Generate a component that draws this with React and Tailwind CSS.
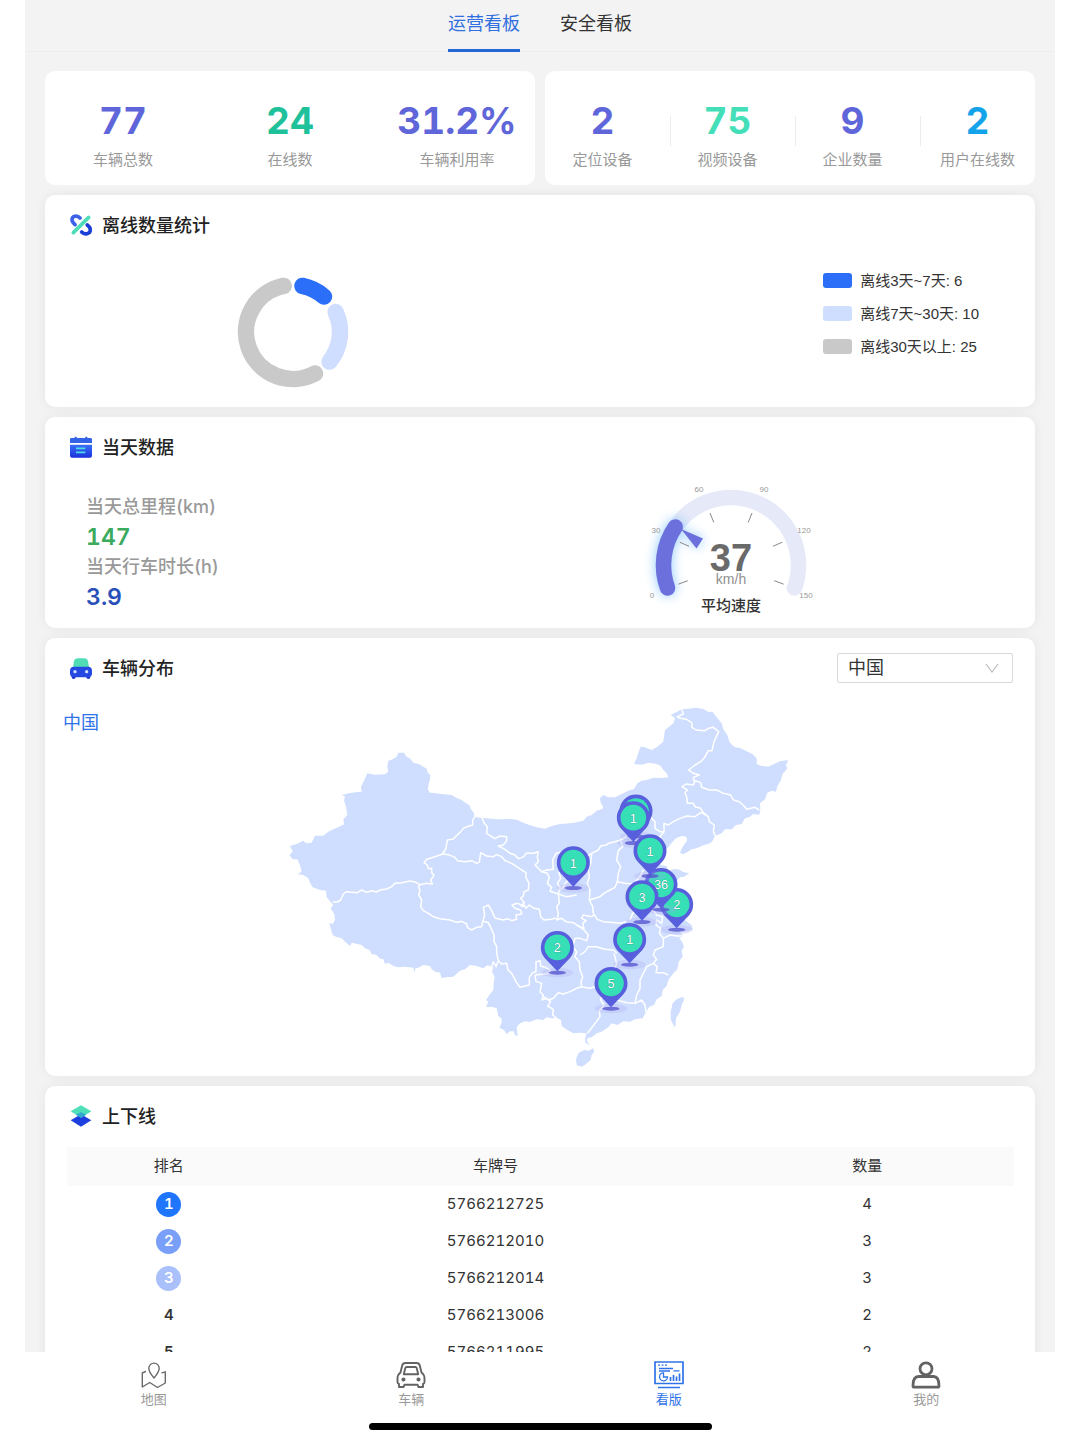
import React, { useState } from "react";
import clsx from "clsx";

const fleetStats = [
  { label: "车辆总数", value: "77", color: "text-[#5f66d9]" },
  { label: "在线数", value: "24", color: "text-[#1fc19b]" },
  { label: "车辆利用率", value: "31.2%", color: "text-[#5f66d9]" },
];

const deviceStats = [
  { label: "定位设备", value: "2", color: "text-[#5f66d9]" },
  { label: "视频设备", value: "75", color: "text-[#44dfb9]" },
  { label: "企业数量", value: "9", color: "text-[#5f66d9]" },
  { label: "用户在线数", value: "2", color: "text-[#12a3ea]" },
];

const offlineLegend = [
  { label: "离线3天~7天: 6", color: "bg-[#2b6ff8]" },
  { label: "离线7天~30天: 10", color: "bg-[#cfdefe]" },
  { label: "离线30天以上: 25", color: "bg-[#c9c9c9]" },
];

const rankRows = [
  { rank: 1, plate: "5766212725", count: 4, badge: "bg-[#1f75fb]" },
  { rank: 2, plate: "5766212010", count: 3, badge: "bg-[#7a9ff8]" },
  { rank: 3, plate: "5766212014", count: 3, badge: "bg-[#a9c0fa]" },
  { rank: 4, plate: "5766213006", count: 2 },
  { rank: 5, plate: "5766211995", count: 2 },
];

// pins are listed back to front
const pins = [
  { x: 880, y: 518, count: "1" },
  { x: 1068, y: 363, count: "" },
  { x: 1060, y: 383, count: "1" },
  { x: 1190, y: 643, count: "2" },
  { x: 1143, y: 583, count: "36" },
  { x: 1110, y: 482, count: "1" },
  { x: 1086, y: 620, count: "3" },
  { x: 1049, y: 748, count: "1" },
  { x: 832, y: 772, count: "2" },
  { x: 993, y: 880, count: "5" },
];

const mainland =
  "355,188 372,188 380,200 391,206 400,218 417,222 430,230 440,236 442,246 451,256 450,268 446,282 443,298 450,308 462,309 490,313 515,315 530,324 545,330 558,340 568,345 572,356 582,370 583,381 610,384 650,388 695,387 712,390 730,398 748,405 770,412 795,416 815,408 840,402 880,399 910,392 920,380 935,375 950,362 967,357 970,350 962,338 960,325 970,315 985,322 1005,322 1030,310 1050,300 1062,298 1072,280 1085,272 1100,270 1120,263 1140,264 1165,262 1160,250 1150,240 1142,228 1130,222 1105,218 1085,224 1062,222 1070,205 1075,188 1082,170 1095,172 1115,180 1130,172 1150,155 1152,140 1155,120 1170,108 1180,100 1185,85 1172,75 1190,66 1205,58 1225,56 1250,53 1270,57 1285,66 1297,65 1312,84 1325,100 1330,118 1342,135 1348,155 1357,166 1365,172 1380,174 1400,184 1418,193 1430,205 1430,222 1442,227 1465,230 1482,222 1500,214 1525,210 1518,225 1522,235 1508,252 1502,272 1492,288 1488,305 1475,302 1462,308 1455,328 1440,340 1441,358 1438,374 1420,372 1410,380 1395,385 1385,402 1368,405 1355,418 1335,418 1325,430 1305,438 1298,452 1290,460 1270,466 1250,475 1235,478 1222,486 1210,493 1200,488 1208,470 1222,450 1218,440 1205,438 1188,445 1175,458 1165,472 1150,482 1140,495 1136,510 1142,525 1160,528 1165,545 1178,538 1195,538 1210,546 1228,550 1212,560 1200,562 1190,572 1178,580 1172,600 1185,615 1195,640 1208,660 1215,690 1235,706 1238,718 1225,724 1200,728 1212,738 1198,745 1206,755 1212,770 1205,782 1208,800 1196,815 1192,838 1180,850 1165,870 1160,888 1148,900 1145,918 1130,928 1122,945 1108,950 1098,966 1088,985 1065,988 1050,995 1030,994 1012,1005 995,1000 985,1012 965,1025 950,1030 935,1042 922,1045 921,1054 930,1066 916,1058 915,1045 920,1030 900,1028 880,1030 862,1020 845,1008 843,990 830,984 815,985 800,982 790,990 770,988 750,996 735,994 720,1000 710,1012 713,1038 704,1035 702,1024 690,1024 680,1032 672,1020 658,1013 665,998 664,985 655,978 650,955 635,950 618,951 625,935 618,930 632,910 640,900 641,880 644,860 636,845 640,830 622,826 610,835 590,828 570,825 555,838 540,842 520,860 500,862 485,864 480,848 466,845 455,838 450,828 430,825 415,833 405,836 404,850 400,833 375,830 355,832 340,828 325,818 315,822 310,808 298,805 290,795 275,792 268,780 255,775 245,765 232,762 215,758 210,768 195,755 185,745 168,740 158,735 152,715 148,698 158,702 165,690 163,672 152,655 160,645 152,636 140,622 138,602 120,600 98,592 90,578 85,565 70,555 53,552 65,545 60,525 52,508 38,508 28,495 38,485 30,468 50,462 70,452 78,460 95,458 105,437 130,437 145,425 160,418 178,410 192,403 190,388 202,375 198,350 192,330 195,320 186,315 205,310 232,306 245,305 243,292 252,272 262,250 285,254 315,253 325,245 322,230 325,212 338,208 350,200";

const provinceBorders = [
  "583,381 578,392 578,405 560,410 550,415 540,428 528,438 520,447 502,450 498,475 488,492 465,500 440,508 432,518 442,525 445,536 455,535 455,548 462,556 452,570 457,582 440,580 420,584 405,576 390,573 365,578 345,580 335,590 320,597 300,600 290,606 275,602 260,607 245,600 232,608 200,605 190,612 182,630 172,636 158,636",
  "488,492 505,494 525,502 532,512 555,515 575,512 590,520 598,516 602,488 620,498 640,500 650,494 665,500 675,512 695,520 710,530 725,540 738,548 738,562 747,580 745,600 732,605 730,618 722,625 733,638 726,645 712,640 696,645 705,655 722,660 725,672 708,675 710,688 695,692 682,686 670,690 645,684 635,662 625,645 610,652 614,675 608,695 605,710 590,712 575,720 562,712 560,702 545,694 530,697 510,690 480,686 460,680 445,670 430,662 422,650 425,630 416,615 420,600 415,590 420,584",
  "608,693 625,698 632,712 642,735 642,755 650,770 650,790 655,812 648,830 640,815 636,828",
  "655,812 665,822 680,820 684,840 695,850 708,875 720,892 735,888 748,885 748,862 758,848 768,845 768,815 780,812 782,828 795,832 808,838 812,850 765,855 768,874 785,880 780,905 790,915 786,930 800,925 812,935 803,948 820,958 818,975 830,985",
  "605,380 612,398 622,410 620,430 632,438 645,446 660,438 680,440 680,452 670,465 655,468 675,478 690,490 705,495 715,506 732,500 738,490 760,490 775,485 772,500 775,515 765,525 775,535 785,545 800,540 820,538 818,510 828,490 845,486 860,490",
  "785,545 802,550 808,562 802,580 815,592 810,604 835,612 840,592 832,580 842,565 836,545",
  "722,650 732,645 738,655 748,645 762,655 778,658 782,680 792,690 815,688 825,684 832,690 835,670 830,650 838,640 835,612",
  "1040,440 1022,450 1005,455 990,458 978,465 962,468 955,480 935,490 932,520 925,540 928,560 922,580 930,600 928,630 938,650 940,670 952,688 970,695 990,697 1020,700 1040,695",
  "935,490 912,505 900,530 880,560 862,572 850,590 842,600",
  "1022,450 1028,470 1015,482 1010,510 1022,530 1015,550 1012,575 1035,580 1060,582 1080,560 1090,540",
  "1012,575 1005,592 990,600 975,608 960,620 928,630",
  "835,612 860,620 890,615",
  "830,690 845,685 858,695 880,698 890,705 912,715 908,700 918,692 905,685 910,675 935,680 942,675",
  "890,705 912,720 925,735 920,752 900,745 885,745 878,770 890,785 885,800 898,815 900,840 908,860 903,875 905,890 890,895 870,905 850,912 835,908 820,925 805,930 790,920",
  "900,795 915,785 925,770 948,770 975,778 1000,780 1010,790",
  "905,890 930,895 945,890 955,905 968,912 962,930 972,945 958,962 960,980 945,1000 930,1020 922,1030",
  "1002,790 1010,820 1000,850 1005,880",
  "1010,930 1040,938 1065,940 1085,930 1095,945 1098,966",
  "1065,940 1070,915 1080,895 1080,870 1090,850 1100,830 1120,820 1132,830 1128,848 1150,848 1165,855",
  "1120,820 1130,808 1120,795 1125,780 1150,770 1150,745 1138,730 1142,715 1128,705 1130,690 1145,700 1148,680 1130,675 1120,660 1095,665",
  "1150,745 1170,735 1190,738 1212,738",
  "1050,690 1058,670 1070,660",
  "1110,380 1125,395 1125,415 1140,425 1152,425 1152,400 1165,405 1180,395 1200,385 1220,378 1245,380 1262,368 1278,372",
  "1152,425 1140,440 1142,455 1128,470",
  "1306,438 1300,425 1303,405 1288,395 1285,380 1272,372 1262,355 1245,350 1240,340 1222,340 1220,320 1215,308 1222,300 1206,290 1218,282 1240,285 1245,272 1262,278 1265,292 1288,300 1310,300 1330,310 1352,315 1360,330 1378,335 1392,348 1400,358 1425,352 1438,360",
  "1242,275 1240,262 1258,255 1240,250 1226,240 1245,225 1262,215 1272,205 1285,182 1296,182 1302,155 1308,142 1316,125 1300,112 1285,115 1275,122 1248,120 1236,112 1235,98 1220,88 1200,85 1192,80 1210,72 1205,58",
];

const taiwan = "1172,965 1178,940 1190,928 1210,920 1212,930 1205,945 1200,965 1188,985 1186,1012 1180,1004 1172,988";
const hainan = "888,1108 895,1090 912,1080 925,1082 940,1075 943,1085 935,1095 932,1110 915,1124 905,1130 890,1126";

const OfflineIcon = () => (
  <svg viewBox="0 0 66 66" className="size-[22px]" fill="none" strokeWidth="11" strokeLinecap="round">
    <path d="M30 12C22 3 6 5 6 17c0 6 4 10 9 15" stroke="#3d63ea" />
    <path d="M35 54c8 9 26 7 26-7 0-6-4-10-9-14" stroke="#1b3fd6" />
    <path d="M10 56 56 10" stroke="#4fdcb8" />
  </svg>
);

const CalendarIcon = () => (
  <svg viewBox="0 0 66 66" className="size-[22px]">
    <defs>
      <linearGradient id="calendarFill" x1="0" y1="0" x2="0" y2="1">
        <stop offset="0" stopColor="#3a70fa" />
        <stop offset="1" stopColor="#1b32da" />
      </linearGradient>
    </defs>
    <path d="M4 6h10V2h6v4h26V2h6v4h10q4 0 4 4v11H0V10q0-4 4-4z" fill="#3462e6" />
    <path d="M0 26h66v33q0 6-6 6H6q-6 0-6-6z" fill="url(#calendarFill)" />
    <path d="M18 37h28M18 49h28" stroke="#4edbe4" strokeWidth="5" />
  </svg>
);

const CarIcon = () => (
  <svg viewBox="0 0 66 66" className="size-[22px]">
    <path d="M8 36 12 12Q14 4 22 4h22q8 0 10 8l4 24z" fill="#50ddb6" />
    <path d="M5 56h12v5q0 5-6 5t-6-5zM49 56h12v5q0 5-6 5t-6-5z" fill="#2032c8" />
    <rect y="29" width="66" height="32" rx="12" fill="#2448e2" />
    <circle cx="15" cy="44" r="5" fill="#cfe3ff" />
    <circle cx="50" cy="44" r="5" fill="#cfe3ff" />
  </svg>
);

const LayersIcon = () => (
  <svg viewBox="0 0 66 66" className="size-[22px]">
    <path d="M33 28 64 46 33 65 2 46z" fill="#1d3fe0" />
    <path d="M33 1 64 19 33 38 2 19z" fill="#4fdfb8" />
    <path d="M17 29 33 22 49 29 33 38z" fill="#33a9d0" />
  </svg>
);

const MapTabIcon = () => (
  <svg viewBox="0 0 30 28" className="h-[28px] w-[30px]" fill="none" stroke="#6b6b6b" strokeWidth="1.4" strokeLinejoin="round" strokeLinecap="round">
    <path d="M15 17C12 13.500 9.800 10.500 9.800 7.300a5.200 5.200 0 0 1 10.400 0c0 3.200-2.200 6.200-5.200 9.700z" />
    <path d="M6.500 10.500 3.300 12v14l7.400-4.500 7.800 5 7.800-4.500V10.800l-3.300 1" />
  </svg>
);

const CarTabIcon = () => (
  <svg viewBox="0 0 30 28" className="h-[28px] w-[30px]" fill="none" stroke="#636363" strokeWidth="1.900" strokeLinejoin="round">
    <path d="M4.500 11.500 6.200 4.500Q6.900 2 9.500 2h11q2.600 0 3.300 2.500l1.700 7q3 2.200 3 6V21q0 1.500-1.500 2V26h-4.500l-1-2.300h-13L7.500 26H3v-3q-1.500-.5-1.500-2v-3.500q0-3.800 3-6z" />
    <path d="M7.800 13.200 9.300 7Q9.600 6 10.700 6h8.600q1.100 0 1.400 1l1.500 6.200z" />
    <circle cx="7.500" cy="18.500" r="1.100" fill="#636363" />
    <circle cx="22.500" cy="18.500" r="1.100" fill="#636363" />
  </svg>
);

const BoardTabIcon = () => (
  <svg viewBox="0 0 30 28" className="h-[28px] w-[30px]" fill="none" stroke="#2f73e8" strokeWidth="1.700">
    <path d="M1 1h28v21.500H1zM4 26.500h22" />
    <path d="M4 4.200h2M7.500 4.200h2M11 4.200h2M5 7.500h14M5 10h11M19.500 9.800h6" strokeWidth="1.300" />
    <path d="M9.500 11.800a4 4 0 1 0 4 4.200h-4z" strokeWidth="1.300" />
    <path d="M16.500 20v-4M19.500 20v-6M22.500 20v-4.500M25.500 20v-7.500" strokeWidth="1.700" />
  </svg>
);

const UserTabIcon = () => (
  <svg viewBox="0 0 30 28" className="h-[28px] w-[30px]" fill="none" stroke="#636363" strokeWidth="2.800" strokeLinejoin="round">
    <circle cx="15" cy="7.800" r="6" />
    <path d="M7.500 15.500h15q5.500 0 5.500 9.200 0 1.500-1.500 1.500h-23q-1.500 0-1.500-1.500 0-9.200 5.500-9.200z" />
  </svg>
);

const bottomTabs = [
  { label: "地图", Icon: MapTabIcon },
  { label: "车辆", Icon: CarTabIcon },
  { label: "看版", Icon: BoardTabIcon },
  { label: "我的", Icon: UserTabIcon },
];

const Card = ({ icon, title, action, children }) => (
  <section className="rounded-[10px] bg-white shadow-[0_0_12px_rgba(0,0,0,0.06)]">
    <header className="flex items-center justify-between pt-[15px] pr-[22px] pl-[25px]">
      <h2 className="flex h-[30px] items-center gap-[10px] text-[18px] font-medium text-[#222]">
        {icon}
        {title}
      </h2>
      {action}
    </header>
    {children}
  </section>
);

const Stat = ({ stat, divided }) => (
  <div
    className={clsx(
      "flex flex-col items-center gap-[5px] pt-7 pb-[13px]",
      divided &&
        "relative before:absolute before:top-[45px] before:left-0 before:h-[30px] before:w-px before:bg-[#ececec]"
    )}
  >
    <p className={clsx("text-[37px] leading-[44px] font-bold", stat.color)}>{stat.value}</p>
    <p className="text-[15px] leading-6 text-[#999]">{stat.label}</p>
  </div>
);

const Donut = () => (
  <svg viewBox="0 0 126 126" className="size-[126px]" fill="none" strokeWidth="16.500" strokeLinecap="round">
    <path d="M72.400 16.900A47 47 0 0 1 94 27.600" stroke="#2b6ff8" />
    <path d="M105.600 43A47 47 0 0 1 99.500 92.600" stroke="#cfdefe" />
    <path d="M85 104.500A47 47 0 1 1 53.700 16.900" stroke="#c9c9c9" />
  </svg>
);

const gaugePoint = (radius, angle) => {
  const rad = (angle * Math.PI) / 180;
  return [91 + radius * Math.cos(rad), 85 - radius * Math.sin(rad)];
};

const gaugeLabels = [
  { text: "0", x: 12, y: 118 },
  { text: "30", x: 16, y: 53 },
  { text: "60", x: 59, y: 12 },
  { text: "90", x: 124, y: 12 },
  { text: "120", x: 164, y: 53 },
  { text: "150", x: 166, y: 118 },
];

const Gauge = () => {
  const speed = 37;
  const [startX, startY] = gaugePoint(67.5, 200);
  const [endX, endY] = gaugePoint(67.5, -20);
  const [valueX, valueY] = gaugePoint(67.5, 200 - (speed / 150) * 220);
  return (
    <svg viewBox="0 0 182 140" className="h-[140px] w-[182px] overflow-visible font-['Liberation_Sans','Noto_Sans_CJK_SC',sans-serif]" textAnchor="middle">
      <g fill="none" strokeLinecap="round" strokeWidth="15.500">
        <path d={`M${startX} ${startY}A67.5 67.5 0 1 1 ${endX} ${endY}`} stroke="#e6e9f8" />
        <g className="drop-shadow-[0_0_6px_rgba(120,190,255,0.85)]">
          <path d={`M${startX} ${startY}A67.5 67.5 0 0 1 ${valueX} ${valueY}`} stroke="#6c70dc" />
          <path d="M41 49 63 58.500 56.500 68.500z" fill="#6c70dc" stroke="none" />
        </g>
      </g>
      {[200, 156, 112, 68, 24, -20].map((angle) => {
        const [x1, y1] = gaugePoint(56, angle);
        const [x2, y2] = gaugePoint(46, angle);
        return <line key={angle} x1={x1} y1={y1} x2={x2} y2={y2} stroke="#888" strokeWidth="1" />;
      })}
      {gaugeLabels.map((label) => (
        <text key={label.text} x={label.x} y={label.y} fontSize="8" fill="#999">
          {label.text}
        </text>
      ))}
      <text x="91" y="91" fontSize="38" fontWeight="700" fill="#6a6a6a">{speed}</text>
      <text x="91" y="104" fontSize="14" fill="#8f8f8f">km/h</text>
      <text x="91" y="131" fontSize="15" fontWeight="500" fill="#333">平均速度</text>
    </svg>
  );
};

const ChinaMap = () => (
  <svg viewBox="0 0 1560 1140" className="w-[520px]" role="img" aria-label="车辆分布">
    <g fill="#cfdefe">
      <polygon points={mainland} />
      <polygon points={taiwan} />
      <polygon points={hainan} />
    </g>
    <g fill="none" stroke="#fff" strokeWidth="4.500" strokeLinejoin="round">
      {provinceBorders.map((points) => (
        <polyline key={points} points={points} />
      ))}
    </g>
    {pins.map((pin) => (
      <g key={`${pin.x}-${pin.y}`} transform={`translate(${pin.x} ${pin.y})`}>
        <ellipse cy="76" rx="48" ry="14" fill="#a9a5f0" opacity="0.25" />
        <ellipse cy="76" rx="26" ry="6" fill="#5558cf" opacity="0.8" />
        <path d="M0 72 -38 32A49.500 49.500 0 1 1 38 32z" fill="#585fdd" />
        <circle r="38.500" fill="#37dfb7" />
        <text y="15" textAnchor="middle" fontSize="38" fill="#fff" stroke="#2a9c87" strokeWidth="2" paintOrder="stroke" className="font-['Liberation_Sans',sans-serif]">
          {pin.count}
        </text>
      </g>
    ))}
  </svg>
);

const App = () => {
  const [board, setBoard] = useState("运营看板");
  const [region, setRegion] = useState("中国");

  return (
    <div className="flex h-screen flex-col bg-white font-['Inter','Noto_Sans_CJK_SC',sans-serif] tabular-nums">
      <main className="mx-[25px] min-h-0 flex-1 overflow-y-auto bg-[#f3f3f3] [scrollbar-width:none]">
        <div className="flex justify-center gap-10 border-b border-[#eee]">
          {["运营看板", "安全看板"].map((name) => (
            <button
              key={name}
              onClick={() => setBoard(name)}
              className={clsx(
                "-mb-px border-b-[3px] pb-px text-[18px] leading-[48px]",
                board === name
                  ? "border-[#2468d8] text-[#2f6fe0]"
                  : "border-transparent text-[#333]"
              )}
            >
              {name}
            </button>
          ))}
        </div>

        <div className="flex flex-col gap-[10px] px-5 pt-[19px]">
          <div className="grid grid-cols-2 gap-[10px]">
            <div className="grid grid-cols-3 gap-[11px] rounded-[10px] bg-white">
              {fleetStats.map((stat) => (
                <Stat key={stat.label} stat={stat} />
              ))}
            </div>
            <div className="grid grid-cols-4 gap-[10px] rounded-[10px] bg-white">
              {deviceStats.map((stat, index) => (
                <Stat key={stat.label} stat={stat} divided={index > 0} />
              ))}
            </div>
          </div>

          <Card icon={<OfflineIcon />} title="离线数量统计">
            <div className="flex items-start justify-between pt-[29px] pr-14 pb-3">
              <div className="flex w-[495px] justify-center">
                <Donut />
              </div>
              <ul className="flex flex-col gap-[10px] font-['Liberation_Sans','Noto_Sans_CJK_SC',sans-serif] text-[15px] leading-[23px] text-[#333]">
                {offlineLegend.map((item) => (
                  <li key={item.label} className="flex items-center gap-2">
                    <span className={clsx("h-[15px] w-[29px] rounded-[3px]", item.color)} />
                    {item.label}
                  </li>
                ))}
              </ul>
            </div>
          </Card>

          <Card icon={<CalendarIcon />} title="当天数据">
            <div className="flex pt-[18px] pb-2">
              <dl className="w-[382px] pt-3 pl-[41px] leading-[30px]">
                <dt className="text-[18px] font-medium text-[#999]">当天总里程(km)</dt>
                <dd className="text-[23px] font-semibold text-[#3aaa5c]">147</dd>
                <dt className="text-[18px] font-medium text-[#999]">当天行车时长(h)</dt>
                <dd className="text-[23px] font-semibold text-[#2850b8]">3.9</dd>
              </dl>
              <div className="flex flex-1 justify-center">
                <Gauge />
              </div>
            </div>
          </Card>

          <Card
            icon={<CarIcon />}
            title="车辆分布"
            action={
              <div className="relative">
                <select
                  aria-label="选择区域"
                  value={region}
                  onChange={(e) => setRegion(e.target.value)}
                  className="h-[30px] w-[176px] appearance-none rounded-[2px] border border-[#d9d9d9] bg-white pl-[10px] text-[18px] leading-[28px] text-[#333]"
                >
                  <option>中国</option>
                </select>
                <svg viewBox="0 0 14 10" className="pointer-events-none absolute top-[10px] right-[14px] h-[10px] w-[14px]" fill="none" stroke="#bbb" strokeWidth="1.200">
                  <path d="M1 1l6 8 6-8" />
                </svg>
              </div>
            }
          >
            <div className="grid pt-[7px] pb-[6px]">
              <a href="#china" className="z-10 mt-[18px] ml-[18px] justify-self-start self-start text-[18px] leading-[30px] text-[#2f74e8] [grid-area:1/1]">
                中国
              </a>
              <div className="flex justify-center [grid-area:1/1]">
                <ChinaMap />
              </div>
            </div>
          </Card>

          <Card icon={<LayersIcon />} title="上下线">
            <div className="pt-4 pr-[21px] pb-5 pl-[22px]">
              <table className="w-full table-fixed text-center text-[15px] text-[#333]">
                <thead>
                  <tr className="h-[39px] bg-[#fafafa]">
                    <th className="w-[21.5%] font-normal">排名</th>
                    <th className="w-[47.5%] font-normal">车牌号</th>
                    <th className="w-[31%] font-normal">数量</th>
                  </tr>
                </thead>
                <tbody>
                  {rankRows.map((row) => (
                    <tr key={row.rank} className="h-[37px]">
                      <td>
                        <span
                          className={clsx(
                            "inline-flex size-[25px] items-center justify-center rounded-full align-middle font-semibold",
                            row.badge && "text-white",
                            row.badge
                          )}
                        >
                          {row.rank}
                        </span>
                      </td>
                      <td>{row.plate}</td>
                      <td>{row.count}</td>
                    </tr>
                  ))}
                </tbody>
              </table>
            </div>
          </Card>
        </div>
      </main>

      <footer className="flex flex-col items-center bg-white pb-[10px]">
        <nav className="grid w-full grid-cols-4 px-[25px] pt-[9px] pb-[13px]">
          {bottomTabs.map(({ label, Icon }) => (
            <button
              key={label}
              className={clsx(
                "flex flex-col items-center text-[13px] leading-[21px]",
                label === "看版" ? "text-[#2f73e8]" : "text-[#999]"
              )}
            >
              <Icon />
              {label}
            </button>
          ))}
        </nav>
        <div className="h-[7px] w-[343px] rounded-full bg-black" />
      </footer>
    </div>
  );
};

export default App;
